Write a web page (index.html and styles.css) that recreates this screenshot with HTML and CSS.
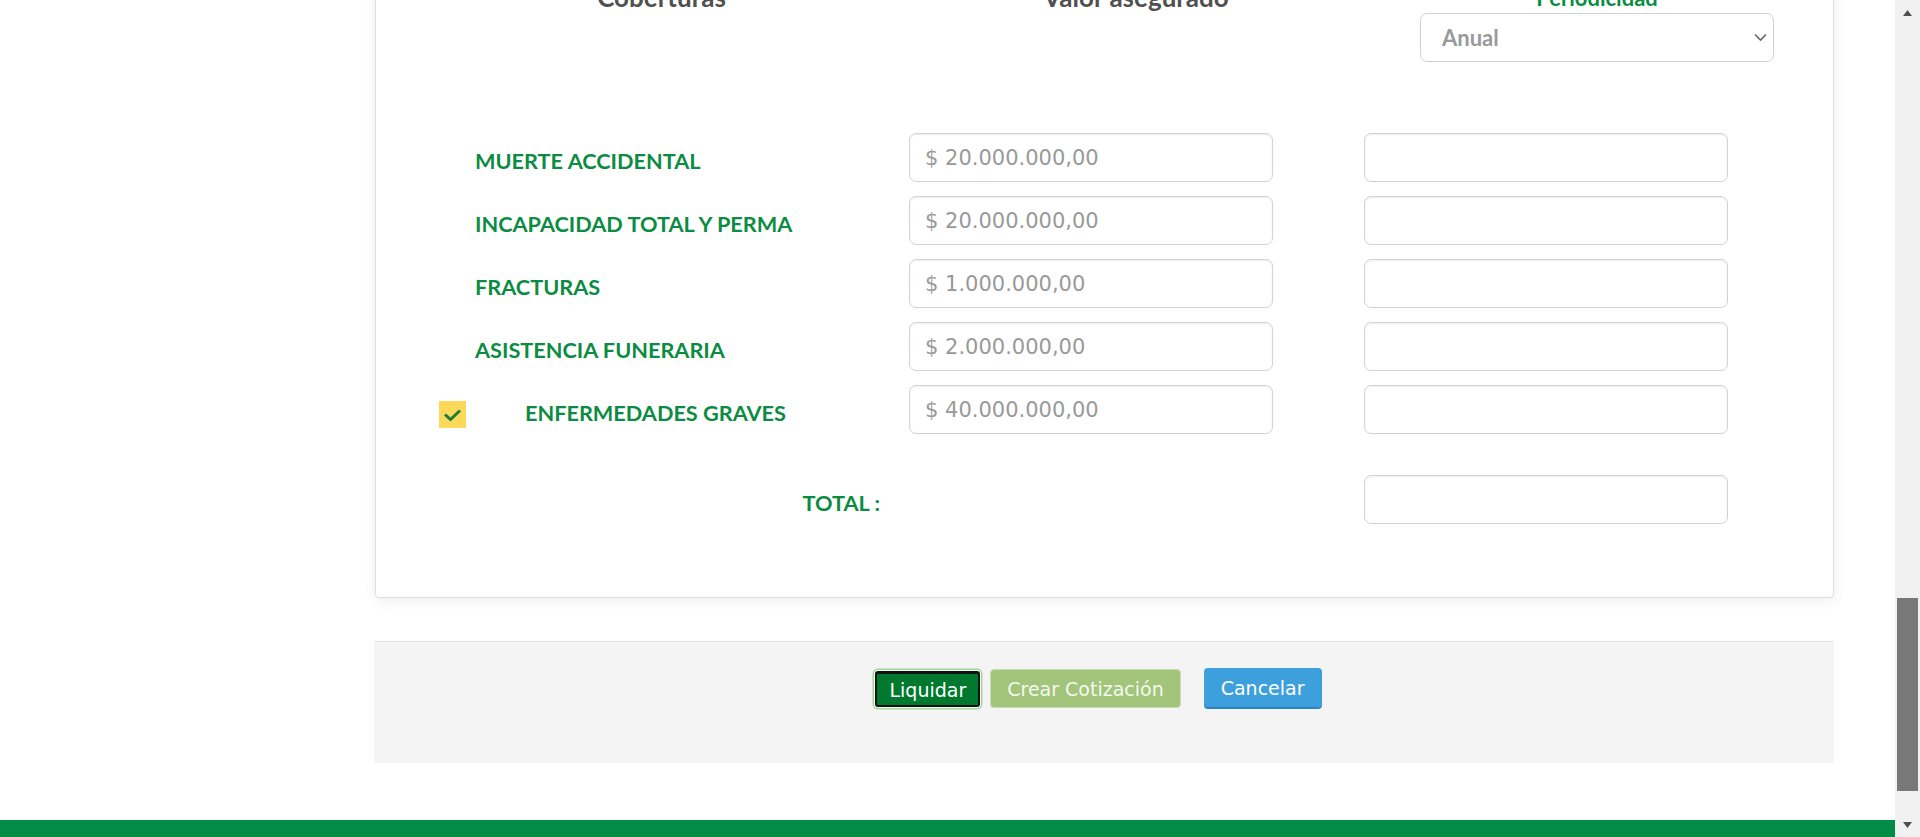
FILE: index.html
```html
<!DOCTYPE html>
<html lang="es">
<head>
<meta charset="utf-8">
<title>Coberturas</title>
<link rel="stylesheet" href="styles.css">
</head>
<body>
<div class="viewport">
  <div class="page">
    <div class="content">
      <section class="card">
        <div class="head">
          <div class="h-col h-cob">Coberturas</div>
          <div class="h-col h-val">Valor asegurado</div>
          <div class="h-col h-per">
            <div class="per-title">Periodicidad</div>
            <div class="select-wrap">
              <select class="select"><option>Anual</option></select>
              <svg class="chev" width="13" height="9" viewBox="0 0 13 9"><path d="M1 1.5 L6.5 7 L12 1.5" fill="none" stroke="#666" stroke-width="1.6"/></svg>
            </div>
          </div>
        </div>
        <div class="rows">
          <div class="row">
            <div class="label"><span class="lbl">MUERTE ACCIDENTAL</span></div>
            <input class="field" placeholder="$ 20.000.000,00">
            <input class="field field-r">
          </div>
          <div class="row">
            <div class="label"><span class="lbl">INCAPACIDAD TOTAL Y PERMA</span></div>
            <input class="field" placeholder="$ 20.000.000,00">
            <input class="field field-r">
          </div>
          <div class="row">
            <div class="label"><span class="lbl">FRACTURAS</span></div>
            <input class="field" placeholder="$ 1.000.000,00">
            <input class="field field-r">
          </div>
          <div class="row">
            <div class="label"><span class="lbl">ASISTENCIA FUNERARIA</span></div>
            <input class="field" placeholder="$ 2.000.000,00">
            <input class="field field-r">
          </div>
          <div class="row">
            <div class="label">
              <span class="check"><svg width="19" height="14" viewBox="0 0 19 14"><path d="M2 6.5 L7.5 11.5 L17 2.5" fill="none" stroke="#1b7d3c" stroke-width="3"/></svg></span>
              <span class="lbl lbl-indent">ENFERMEDADES GRAVES</span>
            </div>
            <input class="field" placeholder="$ 40.000.000,00">
            <input class="field field-r">
          </div>
          <div class="row row-total">
            <div class="label label-total"><span class="lbl">TOTAL :</span></div>
            <div class="spacer"></div>
            <input class="field field-r">
          </div>
        </div>
      </section>
      <div class="actions">
        <button class="btn btn-liq">Liquidar</button>
        <button class="btn btn-crear">Crear Cotización</button>
        <button class="btn btn-cancel">Cancelar</button>
      </div>
    </div>
    <footer class="footer"></footer>
  </div>
  <div class="scrollbar">
    <div class="sb-btn"><svg width="9" height="6" viewBox="0 0 9 6"><polygon points="4.5,0 9,6 0,6" fill="#505050"/></svg></div>
    <div class="sb-track"><div class="sb-thumb"></div></div>
    <div class="sb-btn"><svg width="9" height="6" viewBox="0 0 9 6"><polygon points="0,0 9,0 4.5,6" fill="#505050"/></svg></div>
  </div>
</div>
</body>
</html>
```
FILE: styles.css
```css
* { box-sizing: border-box; }
html, body { margin: 0; padding: 0; height: 100%; }
body {
  font-family: Lato, "Noto Sans", sans-serif;
  background: #fff;
  overflow: hidden;
}
.viewport {
  display: flex;
  height: 837px;
  overflow: hidden;
}
.page {
  flex: 1;
  min-width: 0;
  display: flex;
  flex-direction: column;
}
.content {
  padding: 0 61px 0 374px;
}
.card {
  margin-top: -40px;
  margin-left: 1px;
  background: #fff;
  border: 1px solid #dddddd;
  border-radius: 4px;
  box-shadow: 0 3px 14px rgba(0, 0, 0, 0.07);
  padding: 22px 0 73px 99px;
}
.head {
  display: flex;
  align-items: flex-start;
  margin-left: -99px;
}
.h-col {
  font-weight: 700;
  font-size: 26px;
  line-height: 30px;
  color: #505050;
  text-align: center;
}
.h-cob { width: 571px; margin-top: -1px; }
.h-val { width: 378px; margin-top: -1px; }
.h-per { width: 354px; margin-left: 95px; }
.per-title {
  color: #0b8c42;
  font-size: 22px;
  line-height: 30px;
}
.select-wrap { position: relative; }
.select {
  appearance: none;
  -webkit-appearance: none;
  width: 354px;
  height: 49px;
  border: 1px solid #d2d2d2;
  border-radius: 7px;
  background: #fff;
  padding: 0 0 0 21px;
  font-family: Lato, "Noto Sans", sans-serif;
  font-weight: 700;
  font-size: 22px;
  color: #999;
  display: block;
}
.chev {
  position: absolute;
  right: 7px;
  top: 20px;
}
.rows {
  margin-top: 71px;
  display: flex;
  flex-direction: column;
  gap: 14px;
}
.row {
  display: flex;
  align-items: center;
  height: 49px;
}
.label {
  width: 434px;
  display: flex;
  align-items: center;
}
.lbl {
  font-weight: 700;
  font-size: 21.7px;
  line-height: 26px;
  color: #0b8c42;
  padding-top: 6px;
}
.lbl-indent { margin-left: 59px; }
.check {
  width: 27px;
  height: 27px;
  margin-left: -36px;
  margin-top: 10px;
  background: #fdd95a;
  display: flex;
  align-items: center;
  justify-content: center;
}
.field {
  width: 364px;
  height: 49px;
  border: 1px solid #d3d3d3;
  border-radius: 7px;
  box-shadow: inset 0 1px 2px rgba(0, 0, 0, 0.07);
  background: #fff;
  padding: 0 0 0 15px;
  font-family: "DejaVu Sans", Verdana, sans-serif;
  font-size: 21px;
  color: #555;
  outline: none;
}
.field::placeholder { color: #999; opacity: 1; }
.field-r { margin-left: 91px; }
.row-total { margin-top: 27px; }
.label-total {
  justify-content: flex-end;
  padding-right: 29px;
}
.spacer { width: 364px; }
.actions {
  margin-top: 43px;
  height: 122px;
  background: #f4f4f4;
  border-top: 1px solid #e4e4e4;
  display: flex;
  justify-content: center;
  align-items: flex-start;
  padding: 26px 11px 0 0;
}
.btn {
  font-family: "DejaVu Sans", Verdana, sans-serif;
  font-size: 19px;
  color: #fff;
  border: none;
  border-radius: 4px;
  cursor: pointer;
  display: flex;
  align-items: center;
  justify-content: center;
}
.btn-liq {
  margin-top: 3px;
  height: 36px;
  padding: 0 12px;
  background: #00792f;
  border: 2px solid #121212;
  border-top-width: 3px;
  border-radius: 3px;
  box-shadow: 0 0 0 1px #f4fbf4, 0 0 0 2.5px #9fd69f;
  margin-right: 10px;
}
.btn-crear {
  margin-top: 1px;
  height: 39px;
  padding: 0 16px;
  background: #a2c47b;
  color: #f4f8ef;
  border: 1px solid #c7dcb0;
  margin-right: 23px;
}
.btn-cancel {
  height: 41px;
  padding: 0 17px;
  background: #3d9fdc;
  border-bottom: 2px solid #2c83bf;
}
.footer {
  margin-top: 57px;
  height: 40px;
  background: #008c44;
  flex-shrink: 0;
}
.scrollbar {
  width: 25px;
  flex-shrink: 0;
  background: #f1f1f1;
  display: flex;
  flex-direction: column;
}
.sb-btn {
  height: 25px;
  display: flex;
  align-items: center;
  justify-content: center;
}
.sb-track {
  flex: 1;
  display: flex;
  flex-direction: column;
}
.sb-thumb {
  margin: auto 2px 21px;
  height: 193px;
  background: #787878;
}
```
